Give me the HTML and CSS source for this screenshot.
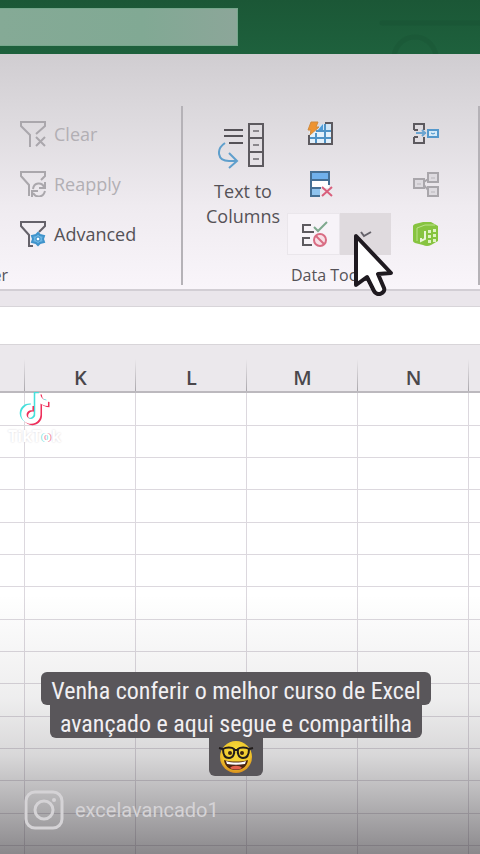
FILE: index.html
```html
<!DOCTYPE html>
<html lang="pt-BR">
<head>
<meta charset="utf-8">
<meta name="viewport" content="width=device-width, initial-scale=1">
<title>Excel</title>
<link rel="stylesheet" href="styles.css">
</head>
<body>
<div class="screen">
  <header class="titlebar">
    <input class="search" type="search" aria-label="Search">
    <svg class="titlebar-art" width="110" height="54" viewBox="0 0 110 54" aria-hidden="true">
      <path d="M12 23H110" stroke="#174f31" stroke-width="5" stroke-linecap="round" opacity=".35"/>
      <circle cx="45" cy="58" r="21" fill="none" stroke="#174f31" stroke-width="5" opacity=".3"/>
    </svg>
  </header>

  <section class="ribbon" aria-label="Data">
    <div class="group group-filter">
      <div class="filter-list">
        <button class="tool muted" disabled>
          <svg width="26" height="26" viewBox="0 0 26 26"><path d="M10 26V14L1 5V1H25V5L16 13M16 16L25 25M25 16L16 25"/></svg>
          Clear
        </button>
        <button class="tool muted" disabled>
          <svg width="26" height="26" viewBox="0 0 26 26"><path d="M9 25V14L1 5V1H25V5L21 9M13 18C14 11 22 11 24 16M25 11V17H19M25 20C23 27 16 27 13 22M12 26V20H18"/></svg>
          Reapply
        </button>
        <button class="tool">
          <svg width="26" height="26" viewBox="0 0 26 26"><path d="M13 25H9V14L1 5V1H25V5L19 11"/><path d="M18 12L20 14L24 15L23 18L24 21L20 22L18 24L16 22L12 21L13 18L12 15L16 14Z" fill="#6db5e2" stroke="#3f93cb"/><circle cx="18" cy="18" r="2" fill="#fff" stroke="#2c86c4" stroke-width="1"/></svg>
          Advanced
        </button>
      </div>
      <div class="group-label label-filter">Sort &amp; Filter</div>
    </div>

    <div class="group group-data">
      <div class="data-tools">
        <button class="big-tool">
          <svg width="50" height="48" viewBox="0 0 50 48">
            <path d="M6 9H25M6 15H25M11 22H25" stroke="#555257"/>
            <path d="M7 22C-2 28 -1 40 11 40H18M11 32L19 40L11 47" stroke="#5f9fcc"/>
            <path d="M31 3H45V45H31ZM31 17H45M31 31H45" stroke="#5d5a5f"/>
            <path d="M35 10H41M35 24H41M35 38H41" stroke="#8a878c"/>
          </svg>
          <span>Text to<br>Columns</span>
        </button>

        <div class="stack">
          <button class="icon-tool" aria-label="Flash Fill">
            <svg width="26" height="26" viewBox="0 0 26 26">
              <path d="M2 11H24V23H2Z" fill="#e3f1fb" stroke="none"/><path d="M14 3H24V11H10Z" fill="#cfe5f6" stroke="none"/>
              <path d="M18 3V23M9 12V23M9 10H24M2 17H24" stroke="#4f93c6"/>
              <path d="M18 2H25V23H2V14" stroke="#5d5a5f"/>
              <path d="M11 9L16 3V9Z" fill="#4d9bd8" stroke="none"/>
              <path d="M4 1H11L9 6H12L3 14L4 9H1Z" fill="#ee9331" stroke="#d08a3c" stroke-width="1"/>
            </svg>
          </button>
          <button class="icon-tool" aria-label="Remove Duplicates">
            <svg width="26" height="26" viewBox="0 0 26 26">
              <path d="M4 1H22V9H4Z" fill="#70b0eb" stroke="none"/><path d="M4 9H22V17H4Z" fill="#fff" stroke="none"/><path d="M4 17H13V25H4Z" fill="#8fc3ee" stroke="none"/>
              <path d="M13 25H4V1H22V14M4 9H22M4 17H14" stroke="#456f94"/>
              <path d="M15 16L25 25M25 16L15 25" stroke="#d95f7c"/>
            </svg>
          </button>
          <div class="split">
            <button class="split-main" aria-label="Data Validation">
              <svg width="28" height="26" viewBox="0 0 28 26">
                <path d="M11 4H3V11H14M10 17H3V24H12" stroke="#5d5a5f"/>
                <path d="M14 6L18 10L27 1" stroke="#7fa88e"/>
                <circle cx="20" cy="19" r="6" stroke="#d96c83" fill="#f8dfe6"/><path d="M16 15L24 23" stroke="#d96c83"/>
              </svg>
            </button>
            <button class="split-more" aria-label="Data Validation options">
              <svg width="12" height="8" viewBox="0 0 12 8"><path d="M1 2L4 6L11 2"/></svg>
            </button>
          </div>
        </div>

        <div class="stack stack-end">
          <button class="icon-tool" aria-label="Consolidate">
            <svg width="28" height="26" viewBox="0 0 28 26">
              <path d="M2 9V3H12V9M2 16V22H12V16M2 9H6M2 16H6" stroke="#5d5a5f"/>
              <path d="M4 12H14M10 9L13 12L10 15" stroke="#6ba4d0"/>
              <path d="M16 9H26V16H16Z" stroke="#5599cc" fill="#d7ebf8"/><path d="M19 12L21 13L23 12" stroke="#4390c9" stroke-width="1"/>
            </svg>
          </button>
          <button class="icon-tool" aria-label="Relationships" disabled>
            <svg width="28" height="26" viewBox="0 0 28 26">
              <path d="M2 8H12V17H2ZM16 2H26V11H16ZM16 16H26V25H16ZM12 11L16 8M12 14L16 19" stroke="#a9a6ab" fill="#dedbe0"/>
              <path d="M5 13H9M19 7H23M19 21H23" stroke="#bab7bc" stroke-width="1"/>
            </svg>
          </button>
          <button class="icon-tool" aria-label="Manage Data Model">
            <svg width="28" height="26" viewBox="0 0 28 26">
              <path d="M1 5Q1 4 3 3L11 1H19L26 5V20L19 24Q15 26 11 24L3 22Q1 21 1 20Z" fill="#87c440" stroke="none"/>
              <path d="M5 7L13 4H23M5 7V20" stroke="#bce28b" stroke-width="1"/>
              <path d="M13 10V18L9 20V17" stroke="#e9f6d5"/>
              <path d="M16 9H19V12H16ZM21 8H24V11H21ZM16 14H19V17H16ZM21 13H24V16H21ZM16 19H19V22H16ZM21 18H24V21H21Z" fill="#dff3c3" stroke="none"/>
            </svg>
          </button>
        </div>
      </div>
      <div class="group-label">Data Tools</div>
      <svg class="cursor" width="44" height="66" viewBox="0 0 44 66" aria-hidden="true">
        <path d="M4 4V53L15 45L22 59C25 65 34 61 32 56L26 42L39 41Z" fill="#fff" stroke="#1f1a20" stroke-width="4" stroke-linejoin="round"/>
      </svg>
    </div>
  </section>

  <div class="formula-row"><input class="formula" type="text" aria-label="Formula bar"></div>

  <main class="sheet">
    <table class="grid">
      <colgroup><col class="col-first"><col class="col"><col class="col"><col class="col"><col class="col"><col></colgroup>
      <thead><tr><th></th><th>K</th><th>L</th><th>M</th><th>N</th><th></th></tr></thead>
      <tbody>
        <tr><td></td><td></td><td></td><td></td><td></td><td></td></tr>
        <tr><td></td><td></td><td></td><td></td><td></td><td></td></tr>
        <tr><td></td><td></td><td></td><td></td><td></td><td></td></tr>
        <tr><td></td><td></td><td></td><td></td><td></td><td></td></tr>
        <tr><td></td><td></td><td></td><td></td><td></td><td></td></tr>
        <tr><td></td><td></td><td></td><td></td><td></td><td></td></tr>
        <tr><td></td><td></td><td></td><td></td><td></td><td></td></tr>
        <tr><td></td><td></td><td></td><td></td><td></td><td></td></tr>
        <tr><td></td><td></td><td></td><td></td><td></td><td></td></tr>
        <tr><td></td><td></td><td></td><td></td><td></td><td></td></tr>
        <tr><td></td><td></td><td></td><td></td><td></td><td></td></tr>
        <tr><td></td><td></td><td></td><td></td><td></td><td></td></tr>
        <tr><td></td><td></td><td></td><td></td><td></td><td></td></tr>
        <tr><td></td><td></td><td></td><td></td><td></td><td></td></tr>
        <tr><td></td><td></td><td></td><td></td><td></td><td></td></tr>
      </tbody>
    </table>

    <div class="tiktok">
      <svg width="32" height="34" viewBox="0 0 32 34" aria-hidden="true">
        <defs><path id="note" d="M12.525.02c1.31-.02 2.61-.01 3.91-.02.08 1.53.63 3.09 1.75 4.17 1.12 1.11 2.7 1.62 4.24 1.79v4.03c-1.44-.05-2.89-.35-4.2-.97-.57-.26-1.1-.59-1.62-.93-.01 2.92.01 5.84-.02 8.75-.08 1.4-.54 2.79-1.35 3.94-1.31 1.92-3.58 3.17-5.91 3.21-1.43.08-2.86-.31-4.08-1.03-2.02-1.19-3.44-3.37-3.65-5.71-.02-.5-.03-1-.01-1.49.18-1.9 1.12-3.72 2.58-4.96 1.66-1.44 3.98-2.13 6.15-1.72.02 1.48-.04 2.96-.04 4.44-.99-.32-2.15-.23-3.02.37-.63.41-1.11 1.04-1.36 1.75-.21.51-.15 1.07-.14 1.61.24 1.64 1.82 3.02 3.5 2.87 1.12-.01 2.19-.66 2.77-1.61.19-.33.4-.67.41-1.06.1-1.79.06-3.57.07-5.36.01-4.03-.01-8.05.02-12.07z"/></defs>
        <g transform="scale(1.28)">
          <use href="#note" x="-1" y="0" fill="#45e0dc"/>
          <use href="#note" x="1.4" y="1.9" fill="#ee2f5b"/>
          <use href="#note" x=".2" y=".9" fill="#fff"/>
        </g>
      </svg>
      <span class="tiktok-name">TikT<span class="tiktok-o">o</span>k</span>
    </div>

    <div class="shade"></div>

    <p class="caption">
      <span class="line">Venha conferir o melhor curso de Excel</span>
      <span class="line">avançado e aqui segue e compartilha</span>
      <span class="line line-emoji">
        <svg width="36" height="34" viewBox="0 0 36 34" role="img" aria-label="🤓">
          <defs><radialGradient id="face" cx=".5" cy=".35" r=".65"><stop offset="0" stop-color="#f7e03c"/><stop offset=".7" stop-color="#f0c52c"/><stop offset="1" stop-color="#d98f1e"/></radialGradient></defs>
          <circle cx="18" cy="17" r="16" fill="url(#face)"/>
          <path d="M6 20C12 22 24 22 30 20C29 27 24 30 18 30S7 27 6 20Z" fill="#4a2412"/>
          <path d="M8 21C14 23 22 23 28 21L27 24C21 25 15 25 9 24Z" fill="#fff"/>
          <path d="M12 28C14 25 22 25 24 28C21 30 15 30 12 28Z" fill="#e2604b"/>
          <circle cx="12" cy="13" r="2" fill="#3c2412"/><circle cx="24" cy="13" r="2" fill="#3c2412"/>
          <path d="M5 9C8 7 14 7 16 9C17 14 15 18 11 18S5 15 5 9ZM20 9C22 7 28 7 31 9C31 15 29 18 25 18S19 14 20 9ZM16 10H20M5 9L1 8M31 9L35 8" fill="none" stroke="#211c1b" stroke-width="2" stroke-linejoin="round"/>
        </svg>
      </span>
    </p>

    <a class="handle" href="#">
      <svg width="40" height="40" viewBox="0 0 40 40" aria-hidden="true"><rect x="2" y="2" width="36" height="36" rx="9"/><circle cx="20" cy="20" r="9"/><circle class="dot" cx="30" cy="10" r="2"/></svg>
      excelavancado1
    </a>
  </main>
</div>
</body>
</html>
```
FILE: styles.css
```css
* { box-sizing: border-box; }

body {
  margin: 0;
  font-family: "Open Sans", "Noto Sans", sans-serif;
  color: #555257;
  background: #fff;
}

.screen {
  display: flex;
  flex-direction: column;
  height: 100vh;
  overflow: hidden;
}

button {
  margin: 0;
  padding: 0;
  border: 0;
  background: none;
  font: inherit;
  color: inherit;
}

svg { display: block; flex: none; }

.titlebar {
  display: flex;
  align-items: center;
  justify-content: space-between;
  flex: none;
  height: 54px;
  background: linear-gradient(#1b5736, #1e613d);
}

.search {
  flex: 0 1 238px;
  min-width: 0;
  height: 38px;
  padding: 0 12px;
  border: 1px solid #76a78c;
  border-left: 0;
  border-radius: 0;
  background: linear-gradient(90deg, #85aa96, #81a994 60%, #8ca699);
  font: inherit;
  appearance: none;
}

.ribbon {
  display: flex;
  flex: none;
  padding-top: 52px;
  background: linear-gradient(#d0cdd1, #dedbdf 30%, #efebf0 65%, #f9f5fa);
  border-bottom: 2px solid #d2ced4;
}

.group {
  position: relative;
  display: flex;
  flex-direction: column;
  margin-bottom: 4px;
  border-right: 2px solid #b5b2b7;
}

.group-filter { flex: 0 0 183px; overflow: hidden; }
.group-data { flex: 1 0 297px; }

.filter-list { padding: 3px 0 6px 20px; }

.tool {
  display: flex;
  align-items: center;
  gap: 8px;
  height: 50px;
  font-size: 18px;
  font-weight: 500;
}

.tool svg,
.big-tool svg,
.icon-tool svg,
.split svg {
  fill: none;
  stroke: #65626a;
  stroke-width: 2;
}

.tool.muted { color: #b2afb4; }
.tool.muted svg { stroke: #aaa7ac; }

.group-label {
  font-size: 16px;
  font-weight: 500;
  line-height: 20px;
  text-align: center;
  white-space: nowrap;
}

.label-filter {
  align-self: flex-start;
  width: 8px;
  direction: rtl;
}

.data-tools {
  display: flex;
  height: 159px;
  padding: 3px 0 6px 20px;
}

.big-tool {
  display: flex;
  flex-direction: column;
  align-items: center;
  gap: 10px;
  width: 80px;
  padding-top: 12px;
  font-size: 18px;
  font-weight: 500;
  line-height: 25px;
}

.stack {
  display: flex;
  flex-direction: column;
  width: 104px;
  margin-left: 4px;
}

.icon-tool {
  display: flex;
  align-items: center;
  height: 50px;
  padding-left: 20px;
}

.stack-end { width: 60px; }
.stack-end .icon-tool { padding-left: 17px; }

.split {
  display: flex;
  height: 42px;
  margin: 4px 0;
}

.split-main,
.split-more {
  display: flex;
  flex: 1;
  align-items: center;
  justify-content: center;
}

.split-main { background: #f7f3f8; border: 1px solid #eae6eb; }
.split-more { background: #dfdade; }

.cursor {
  position: absolute;
  left: 169px;
  top: 126px;
}

.formula-row {
  flex: none;
  padding-top: 15px;
  background: #eae6eb;
}

.formula {
  display: block;
  width: 100%;
  height: 39px;
  padding: 0 12px;
  border: solid #d8d5d9;
  border-width: 1px 0;
  border-radius: 0;
  background: #fff;
  font: inherit;
}

.sheet {
  position: relative;
  flex: 1;
  min-height: 0;
  overflow: hidden;
}

.grid {
  width: 100%;
  table-layout: fixed;
  border-collapse: separate;
  border-spacing: 0;
}

.col-first { width: 25px; }
.col { width: 111px; }

th {
  height: 48px;
  padding: 20px 0 0;
  border-bottom: 2px solid #bcb9be;
  background:
    linear-gradient(transparent, #aaa7ac) right bottom / 1px 32px no-repeat,
    #ebe8ec;
  color: #4a474b;
  font-size: 20px;
  font-weight: 600;
  line-height: 26px;
}

td {
  height: 32px;
  padding: 0;
  border: solid #dcd8de;
  border-width: 0 1px 1px 0;
}

th:last-child { background: #ebe8ec; }
td:last-child { border-right: 0; }

tr:nth-child(3n + 1) td { height: 33px; }

.shade {
  position: absolute;
  inset: auto 0 0;
  height: 260px;
  background: linear-gradient(rgba(40, 36, 42, 0), rgba(40, 36, 42, .08) 40%, rgba(40, 36, 42, .18) 62%, rgba(40, 36, 42, .54));
  pointer-events: none;
}

.tiktok {
  position: absolute;
  left: 8px;
  top: 47px;
  display: flex;
  flex-direction: column;
  align-items: center;
}

.tiktok-name {
  color: #fff;
  font-size: 16px;
  font-weight: 700;
  line-height: 20px;
  text-shadow: 0 0 2px #d5d0d6;
}

.tiktok-o { text-shadow: -1px 0 #8be6e2, 1px 0 #f07f9b; }

.caption {
  position: absolute;
  inset: auto 8px 78px 0;
  display: flex;
  flex-direction: column;
  align-items: center;
  margin: 0;
  color: #f1eff2;
  font-family: "Roboto Condensed", "Liberation Sans Narrow", "Open Sans Condensed", sans-serif;
  font-size: 24px;
  line-height: 28px;
  white-space: nowrap;
}

.line {
  padding: 5px 10px 0;
  border-radius: 0 0 6px 6px;
  background: #59565a;
}

.line:first-child { border-radius: 6px; }

.line-emoji { padding: 2px 9px; }

.handle {
  position: absolute;
  left: 24px;
  bottom: 24px;
  display: flex;
  align-items: center;
  gap: 11px;
  color: #d5d3d6;
  font-family: Roboto, sans-serif;
  font-size: 20px;
  font-weight: 400;
  text-decoration: none;
}

.handle svg { fill: none; stroke: #d5d3d6; stroke-width: 3; }
.handle .dot { fill: #d5d3d6; stroke: none; }
```
